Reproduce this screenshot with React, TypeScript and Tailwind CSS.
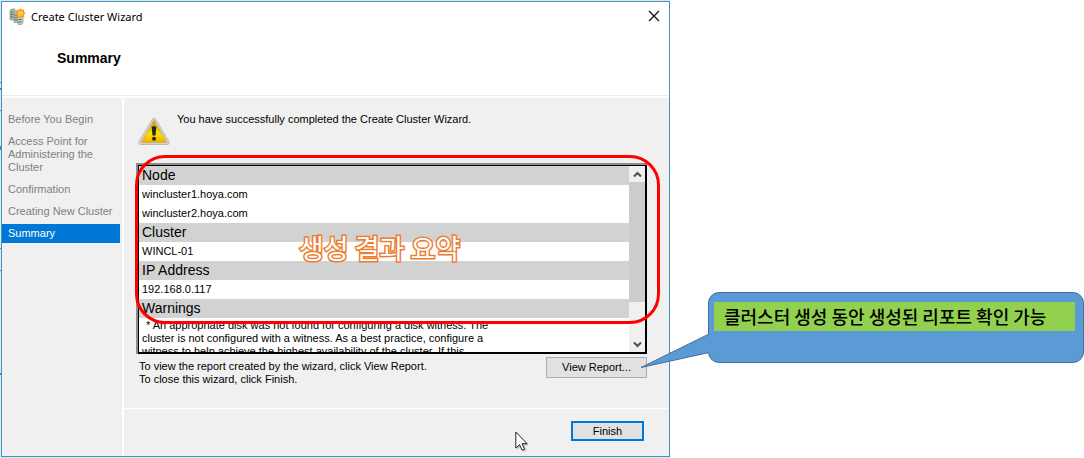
import React from "react";

const steps = [
  "Before You Begin",
  "Access Point for Administering the Cluster",
  "Confirmation",
  "Creating New Cluster",
  "Summary",
];

const sections = [
  { title: "Node", rows: ["wincluster1.hoya.com", "wincluster2.hoya.com"] },
  { title: "Cluster", rows: ["WINCL-01"] },
  { title: "IP Address", rows: ["192.168.0.117"] },
  { title: "Warnings", rows: [] },
];

function ClusterIcon() {
  return (
    <svg width="17" height="17" viewBox="0 0 17 17" aria-hidden="true">
      <g stroke="#7d8a80" strokeWidth="0.6">
        <path d="M1 2.500 2.500 1H6v9.500L4.500 12H1z" fill="#a9b8aa" />
        <path d="M5 4.500 6.500 3H10v10L8.500 14.500H5z" fill="#b6c4b5" />
        <path d="M9 7.500 10.500 6H14v9L12.500 16.500H9z" fill="#c3d0c2" />
      </g>
      <path d="M1.500 4h2.500M1.500 6.500h2.500M1.500 9h2.500M5.500 7h3M5.500 9.500h3M5.500 12h3M9.500 11.500h3M9.500 14h3" stroke="#4f7259" strokeWidth="1" />
      <path d="M11.500 .2 13 1.800l2.400-.4-.4 2.400 1.600 1.500L15 6.800l.4 2.400-2.400-.3-1.500 1.500L10 8.900l-2.400.3.400-2.400-1.600-1.500L8 3.800l-.4-2.400 2.400.4z" fill="#f3a21f" />
      <circle cx="11.500" cy="5.300" r="2.500" fill="#ffc44a" />
    </svg>
  );
}

function WarningIcon() {
  return (
    <svg width="32" height="30" viewBox="0 0 32 30" aria-hidden="true">
      <defs>
        <linearGradient id="warnFill" x1="0" y1="0" x2="0" y2="1">
          <stop offset="0" stopColor="#b8a010" />
          <stop offset="0.5" stopColor="#f0d400" />
          <stop offset="0.6" stopColor="#ffe100" />
          <stop offset="1" stopColor="#f2b000" />
        </linearGradient>
      </defs>
      <path d="M14.300 2.200Q16 0 17.700 2.200L30.900 24.500Q32 27.500 29 27.500H3Q0 27.500 1.100 24.500z" fill="#d2d2cf" stroke="#b0b0ac" strokeWidth="0.8" />
      <path d="M16 3.500 28.600 25.300H3.400z" fill="url(#warnFill)" stroke="#c79a08" strokeWidth="0.6" strokeLinejoin="round" />
      <path d="M13.700 10Q16 8 18.300 10L17.500 18.500H14.500z" fill="#26241a" />
      <circle cx="16" cy="21.800" r="2" fill="#26241a" />
    </svg>
  );
}

function Chevron({ up }: { up?: boolean }) {
  return (
    <svg width="9" height="7" viewBox="0 0 9 7" aria-hidden="true">
      <path d={up ? "M1 5.500 4.500 2 8 5.500" : "M1 1.500 4.500 5 8 1.500"} fill="none" stroke="#505050" strokeWidth="2" />
    </svg>
  );
}

function EdgeMarks() {
  return (
    <svg className="absolute top-0 left-0" width="1" height="458" aria-hidden="true">
      <path d="M0 82h1v1H0zM0 88h1v2H0zM0 110h1v1H0zM0 146h1v4H0zM0 248h1v1H0zM0 270h1v1H0zM0 373h1v2H0z" fill="#3f86ad" />
    </svg>
  );
}

function Summary() {
  return (
    <div className="flex h-[191px] border-2 border-r-0 border-b-0 border-[#8c8c8c]">
      <div className="flex min-w-0 flex-1 border border-r-2 border-b-2 border-black bg-white">
        <div className="min-w-0 flex-1 overflow-hidden">
          {sections.map((s) => (
            <section key={s.title}>
              <h2 className="bg-[#d2d2d2] pl-[3px] text-[14px] leading-[19px]">{s.title}</h2>
              {s.rows.map((r) => (
                <p key={r} className="pl-[3px] leading-[19px]">{r}</p>
              ))}
            </section>
          ))}
          <p className="pt-px pl-[3px] whitespace-nowrap">
            <span className="pl-1">* An appropriate disk was not found for configuring a disk witness. The</span>
            <br />
            cluster is not configured with a witness. As a best practice, configure a
            <br />
            witness to help achieve the highest availability of the cluster. If this
          </p>
        </div>
        <div className="flex w-4 flex-col bg-[#f0f0f0]">
          <button aria-label="Scroll up" className="flex h-4 items-center justify-center"><Chevron up /></button>
          <div className="h-[120px] bg-[#cdcdcd]" />
          <div className="flex-1" />
          <button aria-label="Scroll down" className="flex h-4 items-center justify-center"><Chevron /></button>
        </div>
      </div>
    </div>
  );
}

function Cursor() {
  return (
    <svg className="absolute top-[22px] left-[391px]" width="14" height="22" viewBox="0 0 14 22" aria-hidden="true">
      <path d="M2 2v17l4-3.500 2.700 5.500 3-1.400L9 14.500h5z" fill="#000" opacity="0.2" />
      <path d="M.8 1v16l3.700-3.400 2.600 5.600 2.400-1.100-2.500-5.400h5.100z" fill="#fff" stroke="#222" strokeWidth="1" />
    </svg>
  );
}

function Wizard() {
  return (
    <main className="flex min-w-0 flex-1 flex-col border border-[#4a8fb5] bg-white">
      <header className="flex h-[93px] flex-col">
        <div className="flex h-7 items-center gap-[5px] pr-[7px] pl-[7px]">
          <ClusterIcon />
          <span className="flex-1 pt-px font-['Noto_Sans'] text-[11px] leading-4">Create Cluster Wizard</span>
          <button aria-label="Close" className="flex size-4 items-center justify-center">
            <svg width="12" height="12" viewBox="0 0 12 12" aria-hidden="true">
              <path d="m1 1 10 10M11 1 1 11" stroke="#111" strokeWidth="1.300" />
            </svg>
          </button>
        </div>
        <h1 className="mt-5 pl-[55px] text-[14px] leading-4 font-bold">Summary</h1>
      </header>
      <div className="flex flex-1 gap-0.5 border-t border-[#ececec] pt-0.5">
        <nav className="w-[120px] shrink-0 bg-[#f0f0f0] pt-3 pr-0.5">
          <ol className="flex flex-col gap-[3px] text-[#808080]">
            {steps.map((s) => (
              <li
                key={s}
                aria-current={s === "Summary" ? "step" : undefined}
                className="py-[3px] pr-1 pl-1.5 aria-[current=step]:bg-[#0078d7] aria-[current=step]:text-white"
              >
                {s}
              </li>
            ))}
          </ol>
        </nav>
        <div className="flex min-w-0 flex-1 flex-col bg-[#f0f0f0]">
          <div className="flex flex-1 flex-col pr-[22px] pl-3">
            <div className="flex h-[65px] gap-[7px] pt-[15px] pl-0.5">
              <div className="pt-1"><WarningIcon /></div>
              <p>You have successfully completed the Create Cluster Wizard.</p>
            </div>
            <div className="relative">
              <Summary />
              <div className="pointer-events-none absolute -top-2 -right-[13px] -left-px h-[169px] rounded-[30px] border-3 border-[#fe0000]" />
              <p className="pointer-events-none absolute top-[69px] left-[163px] font-['Noto_Sans_CJK_KR',sans-serif] text-[27px] leading-8 font-normal whitespace-nowrap text-white [paint-order:stroke_fill] [-webkit-text-stroke:3px_#ed7d31]">
                생성 결과 요약
              </p>
            </div>
            <div className="flex justify-between pt-[3px] pl-[3px]">
              <p className="pt-[3px]">
                To view the report created by the wizard, click View Report.
                <br />
                To close this wizard, click Finish.
              </p>
              <button className="h-[21px] w-[101px] border border-[#adadad] bg-[#e1e1e1]">View Report...</button>
            </div>
          </div>
          <footer className="relative flex h-12 justify-end border-t border-white pt-3 pr-[25px]">
            <Cursor />
            <button className="h-5 w-[73px] border-2 border-[#0078d7] bg-[#e1e1e1]">Finish</button>
          </footer>
        </div>
      </div>
    </main>
  );
}

function Callout() {
  return (
    <aside className="relative mt-[292px] h-[71px] w-[376px] shrink-0 rounded-[11px] border border-[#41719c] bg-[#5b9bd5] px-[5px] pt-[9px]">
      <svg className="absolute top-10 -left-[69px]" width="70" height="36" viewBox="0 0 70 36" aria-hidden="true">
        <path d="M70 .5 1 34.500 70 19.500z" fill="#5b9bd5" />
        <path d="M69 1 1 34.500 69 19.500" fill="none" stroke="#41719c" />
      </svg>
      <p className="mr-[3px] bg-[#92d050] pl-2.5 font-['Noto_Sans_CJK_KR',sans-serif] text-[18px] leading-[29px] font-medium whitespace-nowrap">
        클러스터 생성 동안 생성된 리포트 확인 가능
      </p>
    </aside>
  );
}

export default function App() {
  return (
    <div className="relative flex min-h-screen gap-[38px] bg-white font-['Liberation_Sans',sans-serif] text-[11px] leading-[13px] text-black">
      <EdgeMarks />
      <div className="flex min-w-0 flex-1 border-y border-l border-[#d5edf8]">
        <Wizard />
      </div>
      <Callout />
    </div>
  );
}
